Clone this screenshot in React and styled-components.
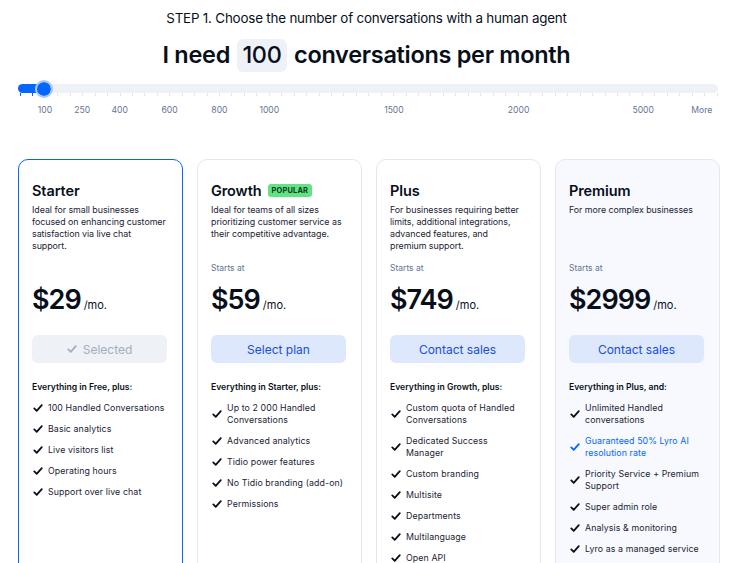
import styled, { createGlobalStyle } from "styled-components"

const GlobalStyle = createGlobalStyle`
  html, body {
    margin: 0;
    padding: 0;
    background: #fff;
    overflow: hidden;
  }
  body {
    font-family: Inter, "Noto Sans", sans-serif;
    color: #080f1a;
  }
`

const STEPS = 56
const labels = [
  { at: 2, text: "100" },
  { at: 5, text: "250" },
  { at: 8, text: "400" },
  { at: 12, text: "600" },
  { at: 16, text: "800" },
  { at: 20, text: "1000" },
  { at: 30, text: "1500" },
  { at: 40, text: "2000" },
  { at: 50, text: "5000" },
  { at: 54.7, text: "More" },
]

const plans = [
  {
    name: "Starter",
    desc: "Ideal for small businesses focused on enhancing customer satisfaction via live chat support.",
    price: "$29",
    button: "Selected",
    selected: true,
    intro: "Everything in Free, plus:",
    features: [
      "100 Handled Conversations",
      "Basic analytics",
      "Live visitors list",
      "Operating hours",
      "Support over live chat",
    ],
  },
  {
    name: "Growth",
    popular: true,
    desc: "Ideal for teams of all sizes prioritizing customer service as their competitive advantage.",
    startsAt: true,
    price: "$59",
    button: "Select plan",
    intro: "Everything in Starter, plus:",
    features: [
      "Up to 2 000 Handled Conversations",
      "Advanced analytics",
      "Tidio power features",
      "No Tidio branding (add-on)",
      "Permissions",
    ],
  },
  {
    name: "Plus",
    desc: "For businesses requiring better limits, additional integrations, advanced features, and premium support.",
    startsAt: true,
    price: "$749",
    button: "Contact sales",
    intro: "Everything in Growth, plus:",
    features: [
      "Custom quota of Handled Conversations",
      "Dedicated Success Manager",
      "Custom branding",
      "Multisite",
      "Departments",
      "Multilanguage",
      "Open API",
    ],
  },
  {
    name: "Premium",
    tinted: true,
    desc: "For more complex businesses",
    startsAt: true,
    price: "$2999",
    button: "Contact sales",
    intro: "Everything in Plus, and:",
    features: [
      "Unlimited Handled conversations",
      { text: "Guaranteed 50% Lyro AI resolution rate", accent: true },
      "Priority Service + Premium Support",
      "Super admin role",
      "Analysis & monitoring",
      "Lyro as a managed service",
    ],
  },
]

const Check = ({ color }) => (
  <svg width="10" height="10" viewBox="0 0 10 10" fill="none">
    <path
      d="M1.3 5.4 L3.7 7.8 L8.8 2.1"
      stroke={color}
      strokeWidth="1.8"
      strokeLinecap="round"
      strokeLinejoin="round"
    />
  </svg>
)

const App = () => {
  return (
    <Page>
      <GlobalStyle />
      <Step>STEP 1. Choose the number of conversations with a human agent</Step>
      <Heading>
        I need <Amount>100</Amount> conversations per month
      </Heading>

      <Slider>
        <Track>
          <Fill />
          <Thumb />
        </Track>
        <Ticks>
          {Array.from({ length: STEPS + 1 }).map((_, i) => (
            <Tick key={i} $active={i < 2} />
          ))}
        </Ticks>
        <Labels>
          {labels.map((l) => (
            <Label key={l.text} style={{ left: `${(l.at / STEPS) * 100}%` }}>
              {l.text}
            </Label>
          ))}
        </Labels>
      </Slider>

      <Cards>
        {plans.map((p) => (
          <Card key={p.name} $selected={p.selected} $tinted={p.tinted}>
            <TitleRow>
              <Title>{p.name}</Title>
              {p.popular && <Badge>POPULAR</Badge>}
            </TitleRow>
            <Desc>{p.desc}</Desc>
            <StartsAt $hidden={!p.startsAt}>Starts at</StartsAt>
            <PriceRow>
              <Price>{p.price}</Price>
              <Per>/mo.</Per>
            </PriceRow>
            <Button $selected={p.selected}>
              {p.selected && <Check color="#a3aec0" />}
              {p.button}
            </Button>
            <Intro>{p.intro}</Intro>
            <Features>
              {p.features.map((f) => {
                const item = typeof f === "string" ? { text: f } : f
                return (
                  <Feature key={item.text} $accent={item.accent}>
                    <Check color={item.accent ? "#0566ff" : "#080f1a"} />
                    <span>{item.text}</span>
                  </Feature>
                )
              })}
            </Features>
          </Card>
        ))}
      </Cards>
    </Page>
  )
}

const Page = styled.div`
  width: 733px;
  height: 563px;
  display: flex;
  flex-direction: column;
  align-items: center;
  padding-top: 9px;
  box-sizing: border-box;
  overflow: hidden;
`

const Step = styled.div`
  font-size: 13.4px;
  letter-spacing: -0.2px;
  line-height: 18px;
  color: #080f1a;
`

const Heading = styled.h1`
  margin: 11px 0 0;
  font-size: 23.5px;
  font-weight: 600;
  letter-spacing: -0.3px;
  line-height: 34px;
  display: flex;
  align-items: center;
  gap: 7px;
`

const Amount = styled.span`
  display: inline-flex;
  align-items: center;
  justify-content: center;
  width: 50px;
  height: 33px;
  border-radius: 6px;
  background: #eef2f8;
  font-weight: 500;
`

const Slider = styled.div`
  width: 700px;
  margin-top: 12px;
  align-self: flex-start;
  margin-left: 18px;
`

const Track = styled.div`
  position: relative;
  height: 9px;
  border-radius: 5px;
  background: #eef2f7;
`

const Fill = styled.div`
  width: 26px;
  height: 100%;
  border-radius: 5px;
  background: #0566ff;
`

const Thumb = styled.div`
  position: absolute;
  left: 17px;
  top: 50%;
  width: 14px;
  height: 14px;
  margin-top: -9px;
  border-radius: 50%;
  background: #0566ff;
  border: 2px solid #a9c8fd;
  background-clip: padding-box;
`

const Ticks = styled.div`
  display: flex;
  justify-content: space-between;
  padding: 0 0 0 2px;
  height: 4px;
`

const Tick = styled.span`
  width: 1px;
  height: 3px;
  background: ${(p) => (p.$active ? "#0566ff" : "#e1e6ee")};
`

const Labels = styled.div`
  position: relative;
  height: 20px;
  margin-top: 8px;
  margin-left: 2px;
`

const Label = styled.span`
  position: absolute;
  top: 0;
  transform: translateX(-50%);
  font-size: 8.6px;
  color: #647491;
  white-space: nowrap;
`

const Cards = styled.div`
  align-self: stretch;
  display: grid;
  grid-template-columns: repeat(4, 165px);
  gap: 14px;
  padding: 0 14px 0 18px;
  margin-top: 34px;
`

const Card = styled.div`
  height: 460px;
  box-sizing: border-box;
  padding: 20px 16px 0 13px;
  border-radius: 10px;
  border: 1px solid ${(p) => (p.$selected ? "#0566ff" : "#e2e8f0")};
  background: ${(p) => (p.$tinted ? "#f7f9fe" : "#fff")};
  display: flex;
  flex-direction: column;
`

const TitleRow = styled.div`
  display: flex;
  align-items: center;
  gap: 6px;
  height: 20px;
`

const Title = styled.h2`
  margin: 0;
  font-size: 14.5px;
  font-weight: 600;
  letter-spacing: -0.1px;
`

const Badge = styled.span`
  background: #62e283;
  color: #083d1c;
  font-size: 7.4px;
  font-weight: 700;
  letter-spacing: 0.2px;
  padding: 2px 4px;
  border-radius: 3px;
  line-height: 9px;
`

const Desc = styled.p`
  margin: 4px 0 0;
  font-size: 8.9px;
  line-height: 12px;
  height: 48px;
  color: #1a2433;
  letter-spacing: -0.05px;
`

const StartsAt = styled.div`
  margin-top: 10px;
  font-size: 8.5px;
  line-height: 12px;
  color: #647491;
  visibility: ${(p) => (p.$hidden ? "hidden" : "visible")};
`

const PriceRow = styled.div`
  display: flex;
  align-items: baseline;
  gap: 3px;
  margin-top: 8px;
  height: 36px;
`

const Price = styled.span`
  font-size: 27px;
  font-weight: 600;
  letter-spacing: -1px;
  line-height: 36px;
`

const Per = styled.span`
  font-size: 11px;
  color: #080f1a;
`

const Button = styled.button`
  margin-top: 17px;
  height: 28px;
  width: 135px;
  border: none;
  border-radius: 6px;
  display: flex;
  align-items: center;
  justify-content: center;
  gap: 6px;
  font-family: inherit;
  font-size: 12px;
  background: ${(p) => (p.$selected ? "#eef1f5" : "#dde8fc")};
  color: ${(p) => (p.$selected ? "#a3aec0" : "#1a4ed8")};
  cursor: pointer;
`

const Intro = styled.div`
  margin-top: 18px;
  font-size: 8.6px;
  font-weight: 600;
  line-height: 12px;
`

const Features = styled.ul`
  list-style: none;
  margin: 9px 0 0;
  padding: 0 0 0 1px;
  display: flex;
  flex-direction: column;
  gap: 9px;
`

const Feature = styled.li`
  display: flex;
  align-items: center;
  gap: 5px;
  font-size: 8.8px;
  letter-spacing: 0.1px;
  line-height: 12px;
  color: ${(p) => (p.$accent ? "#0566ff" : "#1a2433")};

  svg {
    flex: none;
  }
`

export default App
